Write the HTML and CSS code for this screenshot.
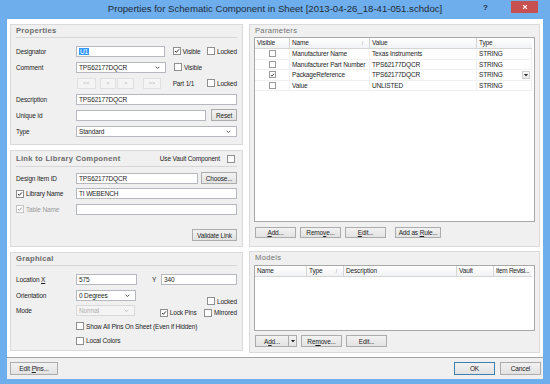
FILE: index.html
```html
<!DOCTYPE html>
<html lang="en">
<head>
    <meta charset="UTF-8">
    <title>Properties for Schematic Component in Sheet</title>
    <link rel="stylesheet" href="styles.css">
</head>
<body>
<div class="window">
    <div class="titlebar">
        <div class="title">Properties for Schematic Component in Sheet [2013-04-26_18-41-051.schdoc]</div>
        <span class="help">?</span>
        <span class="close"><svg width="8" height="8" viewBox="0 0 8 8"><path d="M1.5 1.5 L6.5 6.5 M6.5 1.5 L1.5 6.5" stroke="#fff" stroke-width="1.4"/></svg></span>
    </div>
    <div class="client">
        <div class="main">
            <div class="col col-left">
                <!-- Properties -->
                <section class="panel props">
                    <div class="panel-head bold">Properties</div>
                    <div class="row first">
                        <span class="label">Designator</span>
                        <span class="field w90"><span class="sel">U1</span></span>
                        <span class="check c1"><span class="cb on"><svg viewBox="0 0 8 8"><path d="M1.3 4 L3.1 5.8 L6.6 1.9" /></svg></span>Visible</span>
                        <span class="check"><span class="cb"></span>Locked</span>
                    </div>
                    <div class="row">
                        <span class="label">Comment</span>
                        <span class="field combo w90">TPS62177DQCR<svg class="chev" viewBox="0 0 6 4"><path d="M0.8 0.8 L3 3 L5.2 0.8" /></svg></span>
                        <span class="check c1"><span class="cb"></span>Visible</span>
                    </div>
                    <div class="row">
                        <span class="label"></span>
                        <span class="nav n1">&lt;&lt;</span>
                        <span class="nav n2">&lt;</span>
                        <span class="nav n3">&gt;</span>
                        <span class="nav n4">&gt;&gt;</span>
                        <span class="part">Part 1/1</span>
                        <span class="check"><span class="cb"></span>Locked</span>
                    </div>
                    <div class="row">
                        <span class="label">Description</span>
                        <span class="field grow">TPS62177DQCR</span>
                    </div>
                    <div class="row">
                        <span class="label">Unique Id</span>
                        <span class="field grow"></span>
                        <span class="btn reset">Reset</span>
                    </div>
                    <div class="row">
                        <span class="label">Type</span>
                        <span class="field combo grow">Standard<svg class="chev" viewBox="0 0 6 4"><path d="M0.8 0.8 L3 3 L5.2 0.8" /></svg></span>
                    </div>
                </section>

                <!-- Link to Library Component -->
                <section class="panel link">
                    <div class="panel-head bold link-head">
                        <span>Link to Library Component</span>
                        <span class="vault">Use Vault Component <span class="cb"></span></span>
                    </div>
                    <div class="row lrow">
                        <span class="label">Design Item ID</span>
                        <span class="field grow">TPS62177DQCR</span>
                        <span class="btn choose">Choose...</span>
                    </div>
                    <div class="row lrow">
                        <span class="label"><span class="check"><span class="cb on"><svg viewBox="0 0 8 8"><path d="M1.3 4 L3.1 5.8 L6.6 1.9" /></svg></span>Library Name</span></span>
                        <span class="field grow">TI WEBENCH</span>
                    </div>
                    <div class="row lrow">
                        <span class="label"><span class="check dis"><span class="cb on"><svg viewBox="0 0 8 8"><path d="M1.3 4 L3.1 5.8 L6.6 1.9" /></svg></span>Table Name</span></span>
                        <span class="field grow"></span>
                    </div>
                    <div class="validate-row">
                        <span class="btn validate">Validate Link</span>
                    </div>
                </section>

                <!-- Graphical -->
                <section class="panel graph">
                    <div class="panel-head bold">Graphical</div>
                    <div class="row grow1">
                        <span class="label">Location <u>X</u></span>
                        <span class="field w61">575</span>
                        <span class="ylabel">Y</span>
                        <span class="field grow">340</span>
                    </div>
                    <div class="row grow2">
                        <span class="label">Orientation</span>
                        <span class="field combo w61">0 Degrees<svg class="chev" viewBox="0 0 6 4"><path d="M0.8 0.8 L3 3 L5.2 0.8" /></svg></span>
                        <span class="check low"><span class="cb"></span>Locked</span>
                    </div>
                    <div class="row grow3">
                        <span class="label">Mode</span>
                        <span class="field combo w61 dis">Normal<svg class="chev" viewBox="0 0 6 4"><path d="M0.8 0.8 L3 3 L5.2 0.8" /></svg></span>
                        <span class="check lockpins"><span class="cb on"><svg viewBox="0 0 8 8"><path d="M1.3 4 L3.1 5.8 L6.6 1.9" /></svg></span>Lock Pins</span>
                        <span class="check"><span class="cb"></span>Mirrored</span>
                    </div>
                    <div class="row grow4">
                        <span class="label"></span>
                        <span class="check"><span class="cb"></span>Show All Pins On Sheet (Even if Hidden)</span>
                    </div>
                    <div class="row grow5">
                        <span class="label"></span>
                        <span class="check"><span class="cb"></span>Local Colors</span>
                    </div>
                </section>
            </div>

            <div class="col col-right">
                <!-- Parameters -->
                <section class="panel params">
                    <div class="panel-head light">Parameters</div>
                    <div class="grid ptable">
                        <div class="ghead">
                            <span class="pc1">Visible</span>
                            <span class="pc2">Name<i class="sort">/</i></span>
                            <span class="pc3">Value</span>
                            <span class="pc4">Type</span>
                        </div>
                        <div class="grow-row">
                            <span class="pc1"><span class="cb"></span></span>
                            <span class="pc2">Manufacturer Name</span>
                            <span class="pc3">Texas Instruments</span>
                            <span class="pc4">STRING</span>
                        </div>
                        <div class="grow-row">
                            <span class="pc1"><span class="cb"></span></span>
                            <span class="pc2">Manufacturer Part Number</span>
                            <span class="pc3">TPS62177DQCR</span>
                            <span class="pc4">STRING</span>
                        </div>
                        <div class="grow-row">
                            <span class="pc1"><span class="cb on"><svg viewBox="0 0 8 8"><path d="M1.3 4 L3.1 5.8 L6.6 1.9" /></svg></span></span>
                            <span class="pc2">PackageReference</span>
                            <span class="pc3">TPS62177DQCR</span>
                            <span class="pc4">STRING<b class="dd"><svg viewBox="0 0 5 3"><path d="M0 0 H5 L2.5 3 Z" /></svg></b></span>
                        </div>
                        <div class="grow-row">
                            <span class="pc1"><span class="cb"></span></span>
                            <span class="pc2">Value</span>
                            <span class="pc3">UNLISTED</span>
                            <span class="pc4">STRING</span>
                        </div>
                    </div>
                    <div class="btn-row">
                        <span class="btn b41"><span><u>A</u>dd...</span></span>
                        <span class="btn b41"><span>Remo<u>v</u>e...</span></span>
                        <span class="btn b41"><span><u>E</u>dit...</span></span>
                        <span class="btn rule"><span>Add as <u>R</u>ule...</span></span>
                    </div>
                </section>

                <!-- Models -->
                <section class="panel models">
                    <div class="panel-head light">Models</div>
                    <div class="grid mtable">
                        <div class="ghead">
                            <span class="mc1">Name</span>
                            <span class="mc2">Type<i class="sort">/</i></span>
                            <span class="mc3">Description</span>
                            <span class="mc4">Vault</span>
                            <span class="mc5">Item Revisi...</span>
                        </div>
                    </div>
                    <div class="btn-row">
                        <span class="split"><span class="btn addm"><span>A<u>d</u>d...</span></span><span class="btn arrow"><svg viewBox="0 0 5 3"><path d="M0 0 H5 L2.5 3 Z" /></svg></span></span>
                        <span class="btn b41"><span>Re<u>m</u>ove...</span></span>
                        <span class="btn b41">Edit...</span>
                    </div>
                </section>
            </div>
        </div>
        <div class="footer">
            <span class="btn editpins"><span>Edit <u>P</u>ins...</span></span>
            <span class="spacer"></span>
            <span class="btn ok">OK</span>
            <span class="btn cancel">Cancel</span>
        </div>
    </div>
</div>
</body>
</html>
```

FILE: styles.css
```css
html, body {
    margin: 0;
    padding: 0;
}

body {
    font-family: "Liberation Sans", Arial, sans-serif;
    font-size: 6.5px;
    letter-spacing: -0.15px;
    color: #1e1e1e;
    background-color: #6eaeec;
}

.window {
    width: 550px;
    height: 384px;
    background-color: #6eaeec;
    box-sizing: border-box;
    overflow: hidden;
}

/* title bar */

.titlebar {
    position: relative;
    height: 19px;
}

.title {
    text-align: center;
    line-height: 18px;
    font-size: 9.6px;
    letter-spacing: 0;
    color: #1f2b3a;
}

.help {
    position: absolute;
    left: 483px;
    top: 3px;
    font-size: 8px;
    font-weight: bold;
    color: #1f2b3a;
}

.close {
    position: absolute;
    left: 511px;
    top: 1px;
    width: 27px;
    height: 12px;
    background-color: #c75050;
    display: flex;
    align-items: center;
    justify-content: center;
}

.close svg {
    width: 6px;
    height: 6px;
}

/* client area */

.client {
    margin: 0 7px;
    height: 360px;
    background-color: #fff;
    display: flex;
    flex-direction: column;
}

.main {
    height: 338px;
    display: flex;
    gap: 6px;
    padding: 5px 3px 0 3px;
    box-sizing: border-box;
}

.col {
    display: flex;
    flex-direction: column;
    gap: 5px;
}

.col-left {
    width: 233px;
}

.col-right {
    width: 291px;
    gap: 4px;
}

.panel {
    border: 1px solid #dadada;
    background-color: #f0f0f0;
    box-sizing: border-box;
    padding: 0 5px;
}

.props { height: 121px; }
.link { height: 97px; }
.graph { height: 99px; }
.params { height: 223px; padding: 0 4px; }
.models { height: 102px; padding: 0 4px; }

.panel-head {
    height: 12px;
    line-height: 12px;
    font-size: 7.6px;
    letter-spacing: 0.3px;
    color: #6b6b6b;
}

.panel-head.bold {
    font-weight: bold;
    border-bottom: 1px solid #d6d6d6;
}

.panel-head.light {
    padding-left: 1px;
    color: #707070;
}

.link-head {
    height: 15px;
    line-height: 15px;
    display: flex;
    justify-content: space-between;
}

.vault {
    font-weight: normal;
    font-size: 6.5px;
    letter-spacing: -0.15px;
    color: #1e1e1e;
    display: flex;
    align-items: center;
    gap: 7px;
}

/* rows */

.row {
    display: flex;
    align-items: center;
    height: 12px;
    margin-bottom: 4px;
}

.row.first {
    margin-top: 7px;
}

.label {
    width: 60px;
    flex-shrink: 0;
    white-space: nowrap;
}

.field {
    height: 11px;
    background-color: #fff;
    border: 1px solid #b5b8bf;
    box-sizing: border-box;
    display: flex;
    align-items: center;
    padding-left: 2px;
    position: relative;
    white-space: nowrap;
}

.field.grow { flex: 1; }
.w90 { width: 90px; }
.w61 { width: 61px; }

.sel {
    background-color: #3399ff;
    color: #fff;
    padding: 0 1px;
}

.combo .chev {
    position: absolute;
    right: 5px;
    top: 3px;
    width: 5px;
    height: 3.5px;
}

.chev path {
    fill: none;
    stroke: #444;
    stroke-width: 1.1;
}

.field.dis {
    background-color: #f4f4f4;
    border-color: #d9d9d9;
    color: #b0b0b0;
}

.field.dis .chev path {
    stroke: #bbb;
}

/* checkboxes */

.check {
    display: inline-flex;
    align-items: center;
    white-space: nowrap;
}

.cb {
    width: 8px;
    height: 8px;
    box-sizing: border-box;
    border: 1px solid #8e8f8f;
    background-color: #fff;
    display: inline-flex;
    flex-shrink: 0;
    margin-right: 2px;
}

.cb svg {
    width: 6px;
    height: 6px;
}

.cb path {
    fill: none;
    stroke: #222;
    stroke-width: 1.3;
}

.check.dis {
    color: #9a9a9a;
}

.check.dis .cb {
    border-color: #c4c4c4;
}

.check.dis .cb path {
    stroke: #999;
}

.c1 {
    margin-left: 8px;
    width: 35px;
}

.part {
    margin-left: 12px;
    width: 35px;
}

.nav {
    height: 11px;
    box-sizing: border-box;
    border: 1px solid #e0e0e0;
    background-color: #f4f4f4;
    color: #b8b8b8;
    display: flex;
    align-items: center;
    justify-content: center;
    font-size: 6px;
}

.n1 { width: 19px; margin-left: 1px; }
.n2 { width: 17px; margin-left: 4px; }
.n3 { width: 17px; margin-left: 1px; }
.n4 { width: 18px; margin-left: 9px; }

/* buttons */

.btn {
    height: 12px;
    box-sizing: border-box;
    border: 1px solid #acacac;
    background: linear-gradient(#f2f2f2, #e2e2e2);
    display: inline-flex;
    align-items: center;
    justify-content: center;
    white-space: nowrap;
    flex-shrink: 0;
}

.reset { width: 26px; margin-left: 5px; }
.choose { width: 36px; margin-left: 3px; }

.validate-row {
    display: flex;
    justify-content: flex-end;
    margin-top: 14px;
}

.validate { width: 45px; }

.lrow {
    margin-bottom: 3.5px;
}

.link-head + .lrow {
    margin-top: 5px;
}

/* graphical */

.graph .panel-head + .row {
    margin-top: 8px;
}

.graph .row {
    height: 11px;
    margin-bottom: 4.5px;
}

.ylabel {
    width: 24px;
    padding-left: 15px;
    box-sizing: border-box;
}

.check.low {
    margin-left: 71px;
    margin-top: 12px;
}

.lockpins {
    margin-left: 25px;
    width: 46px;
    margin-top: 4px;
}

.grow3 .check:last-child {
    margin-top: 4px;
}

.grow4 {
    margin-top: 1px;
}

.grow5 {
    margin-top: -1px;
}

/* list grids */

.grid {
    background-color: #fff;
    border: 1px solid #a8a8a8;
    box-sizing: border-box;
}

.ptable { height: 185px; }
.mtable { height: 66px; margin-top: 1px; }

.ghead {
    display: flex;
    height: 11px;
    background: linear-gradient(#ffffff, #f1f2f4);
    border-bottom: 1px solid #d5d5d5;
    box-sizing: border-box;
    margin-right: 2px;
}

.ghead span {
    border-right: 1px solid #d5d5d5;
    padding-left: 2px;
    line-height: 10px;
    box-sizing: border-box;
    position: relative;
    white-space: nowrap;
    overflow: hidden;
}

.ghead span:last-child {
    border-right: none;
}

.sort {
    position: absolute;
    right: 6px;
    font-style: normal;
    color: #999;
    font-size: 5px;
}

.grow-row {
    display: flex;
    height: 10.5px;
    border-bottom: 1px solid #f0f0f0;
    box-sizing: border-box;
    margin-right: 2px;
}

.grow-row > span {
    line-height: 10px;
    padding-left: 2px;
    box-sizing: border-box;
    border-right: 1px solid #f0f0f0;
    white-space: nowrap;
    position: relative;
}

.pc1 { width: 35px; }
.pc2 { width: 80px; }
.pc3 { width: 107px; }
.pc4 { flex: 1; }

.grow-row .pc1 {
    display: flex;
    align-items: center;
    justify-content: center;
    padding-left: 0;
}

.grow-row .pc1 .cb {
    width: 7px;
    height: 7px;
    margin: 0;
    border: 1px solid #9a9a9a;
}

.grow-row .dd {
    position: absolute;
    right: 1px;
    top: 1px;
    width: 8px;
    height: 8px;
    box-sizing: border-box;
    border: 1px solid #cfcfcf;
    background: linear-gradient(#f8f8f8, #e4e4e4);
    display: flex;
    align-items: center;
    justify-content: center;
}

.dd svg {
    width: 4px;
    height: 2.5px;
}

.dd path,
.arrow path {
    fill: #222;
}

.mc1 { width: 52px; }
.mc2 { width: 37px; }
.mc3 { width: 113px; }
.mc4 { width: 37px; }
.mc5 { flex: 1; letter-spacing: -0.3px; }

.btn-row {
    display: flex;
    margin-top: 5px;
    padding-left: 1px;
    gap: 4px;
}

.btn-row .btn {
    height: 11px;
}

.b41 { width: 41px; }
.rule { width: 46px; margin-left: 5px; }

.models .btn-row {
    margin-top: 4px;
}

.models .btn-row .btn {
    height: 12px;
}

.split {
    display: flex;
}

.addm { width: 34px; }

.arrow {
    width: 8px;
    border-left: none;
}

.arrow svg {
    width: 4px;
    height: 2.5px;
}

/* footer */

.footer {
    height: 22px;
    box-sizing: border-box;
    border-top: 1px solid #a5a5a5;
    background-color: #f0f0f0;
    display: flex;
    align-items: flex-start;
    padding: 4px 2px 0 3px;
    gap: 5px;
}

.footer .btn {
    height: 13px;
}

.editpins { width: 48px; }
.spacer { flex: 1; }
.ok { width: 41px; border-color: #3c7fb1; }
.cancel { width: 41px; }
```
